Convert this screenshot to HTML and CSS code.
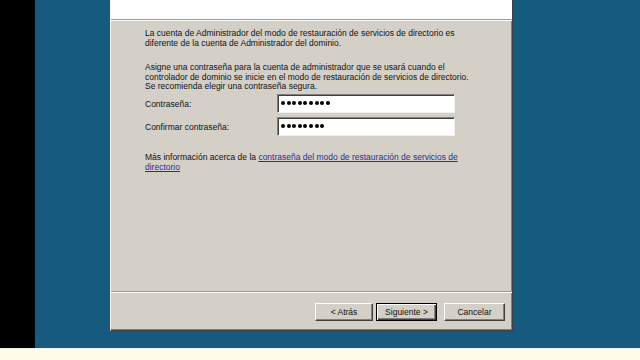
FILE: index.html
```html
<!DOCTYPE html>
<html lang="es">
<head>
<meta charset="utf-8">
<link rel="stylesheet" href="styles.css">
</head>
<body>
<div class="screen">
  <div class="left-strip"></div>
  <div class="desktop">
    <div class="dialog">
      <div class="header"></div>
      <div class="body">
        <p class="para">La cuenta de Administrador del modo de restauración de servicios de directorio es<br>diferente de la cuenta de Administrador del dominio.</p>
        <p class="para gap">Asigne una contraseña para la cuenta de administrador que se usará cuando el<br>controlador de dominio se inicie en el modo de restauración de servicios de directorio.<br>Se recomienda elegir una contraseña segura.</p>
        <div class="form">
          <div class="row">
            <span class="label">Contraseña:</span>
            <div class="field"><span class="dot"></span><span class="dot"></span><span class="dot"></span><span class="dot"></span><span class="dot"></span><span class="dot"></span><span class="dot"></span><span class="dot"></span><span class="dot"></span></div>
          </div>
          <div class="row">
            <span class="label">Confirmar contraseña:</span>
            <div class="field"><span class="dot"></span><span class="dot"></span><span class="dot"></span><span class="dot"></span><span class="dot"></span><span class="dot"></span><span class="dot"></span><span class="dot"></span></div>
          </div>
        </div>
        <p class="para more">Más información acerca de la <a class="link" href="#">contraseña del modo de restauración de servicios de<br>directorio</a></p>
      </div>
      <div class="footer">
        <button class="btn btn-back">&lt; Atrás</button>
        <button class="btn btn-next">Siguiente &gt;</button>
        <button class="btn btn-cancel">Cancelar</button>
      </div>
    </div>
  </div>
</div>
<div class="taskbar"></div>
</body>
</html>
```
FILE: styles.css
```css
* { box-sizing: border-box; }
html, body { margin: 0; padding: 0; }
body {
  width: 640px;
  height: 360px;
  overflow: hidden;
  background: #000;
  font-family: "Liberation Sans", Arial, sans-serif;
  font-size: 8.5px;
  color: #111;
}
.screen {
  display: flex;
  height: 348px;
}
.left-strip {
  width: 35px;
  background: #000;
}
.desktop {
  flex: 1;
  background: #175a7f;
  padding-left: 75px;
}
.dialog {
  width: 403px;
  height: 331px;
  background: #d4d0c8;
  border-left: 1px solid #f4f4f4;
  border-right: 1px solid #404040;
  border-bottom: 1px solid #404040;
  box-shadow: inset -1px -1px 0 #808080;
  display: flex;
  flex-direction: column;
}
.header {
  height: 20px;
  background: #fff;
  border-bottom: 1px solid #a09c94;
  box-shadow: 0 1px 0 #fff;
  flex: none;
}
.body {
  flex: 1;
  padding: 9px 0 0 34px;
}
.para {
  margin: 0;
  line-height: 9.6px;
}
.gap { margin-top: 15px; }
.form {
  margin-top: 2px;
  display: flex;
  flex-direction: column;
  gap: 4px;
}
.row {
  display: flex;
  align-items: center;
}
.label {
  width: 132px;
  padding-top: 2px;
}
.field {
  width: 178px;
  height: 19px;
  background: #fff;
  border-top: 1px solid #808080;
  border-left: 1px solid #808080;
  border-right: 1px solid #f0f0f0;
  border-bottom: 1px solid #f0f0f0;
  box-shadow: inset 1px 1px 0 #404040;
  display: flex;
  align-items: center;
  gap: 1.6px;
  padding-left: 3px;
}
.dot {
  width: 4px;
  height: 4px;
  border-radius: 50%;
  background: #000;
}
.more { margin-top: 16px; line-height: 10px; }
.link {
  color: #2c2c9c;
  text-decoration: underline;
}
.footer {
  flex: none;
  height: 39px;
  border-top: 1px solid #a09c94;
  box-shadow: inset 0 1px 0 #fff;
  display: flex;
  align-items: flex-start;
  padding: 11px 7px 0 0;
  justify-content: flex-end;
}
.btn {
  height: 18px;
  width: 58px;
  margin: 0;
  padding: 0;
  background: #d4d0c8;
  font-family: "Liberation Sans", Arial, sans-serif;
  font-size: 8.5px;
  color: #111;
  border-top: 1px solid #fff;
  border-left: 1px solid #fff;
  border-right: 1px solid #404040;
  border-bottom: 1px solid #404040;
  box-shadow: inset -1px -1px 0 #808080;
}
.btn-back { width: 58px; }
.btn-next {
  width: 61px;
  margin-left: 3px;
  border: 1px solid #000;
  box-shadow: inset 1px 1px 0 #fff, inset -1px -1px 0 #404040, inset -2px -2px 0 #808080;
}
.btn-cancel { width: 61px; margin-left: 7px; }
.taskbar {
  height: 12px;
  background: #fffbe9;
  border-top: 1px solid #eef4f0;
}
```
